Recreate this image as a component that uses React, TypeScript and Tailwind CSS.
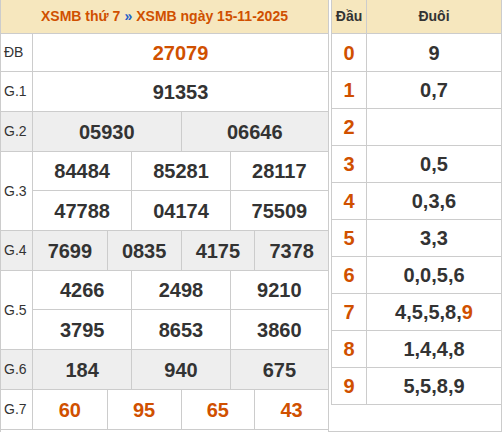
import React from "react"

type Row = {
  label: string
  lines: string[][]
  gray?: boolean
  red?: boolean
  first?: boolean
}

const rows: Row[] = [
  { label: "ĐB", lines: [["27079"]], red: true, first: true },
  { label: "G.1", lines: [["91353"]] },
  { label: "G.2", lines: [["05930", "06646"]], gray: true },
  { label: "G.3", lines: [["84484", "85281", "28117"], ["47788", "04174", "75509"]] },
  { label: "G.4", lines: [["7699", "0835", "4175", "7378"]], gray: true },
  { label: "G.5", lines: [["4266", "2498", "9210"], ["3795", "8653", "3860"]] },
  { label: "G.6", lines: [["184", "940", "675"]], gray: true },
  { label: "G.7", lines: [["60", "95", "65", "43"]], red: true },
]

const cols: Record<number, string> = {
  1: "grid-cols-1",
  2: "grid-cols-2",
  3: "grid-cols-3",
  4: "grid-cols-4",
}

const loto: { dau: string; duoi: React.ReactNode }[] = [
  { dau: "0", duoi: "9" },
  { dau: "1", duoi: "0,7" },
  { dau: "2", duoi: "" },
  { dau: "3", duoi: "0,5" },
  { dau: "4", duoi: "0,3,6" },
  { dau: "5", duoi: "3,3" },
  { dau: "6", duoi: "0,0,5,6" },
  { dau: "7", duoi: <>4,5,5,8,<span className="text-[#d05000]">9</span></> },
  { dau: "8", duoi: "1,4,4,8" },
  { dau: "9", duoi: "5,5,8,9" },
]

function ResultRow({ row }: { row: Row }) {
  return (
    <div className={`flex border-b border-[#cccccc] ${row.gray ? "bg-[#eeeeee]" : "bg-white"}`}>
      <div className="flex w-[32px] shrink-0 items-center border-r border-[#cccccc] pl-[3px] text-[14px] text-[#333333]">
        {row.label}
      </div>
      <div className="flex flex-1 flex-col">
        {row.lines.map((line, i) => (
          <div
            key={i}
            className={`grid ${cols[line.length]} ${row.first ? "h-[37px]" : "h-[39px]"} ${
              i < row.lines.length - 1 ? "border-b border-[#cccccc]" : ""
            }`}
          >
            {line.map((n, j) => (
              <div
                key={j}
                className={`flex items-center justify-center text-[20px] font-bold ${
                  j > 0 ? "border-l border-[#cccccc]" : ""
                } ${row.red ? "text-[#d05000]" : "text-[#333333]"}`}
              >
                {n}
              </div>
            ))}
          </div>
        ))}
      </div>
    </div>
  )
}

export default function App() {
  return (
    <div
      className="flex h-[432px] w-[502px] bg-white"
      style={{ fontFamily: '"Liberation Sans", Arial, sans-serif' }}
    >
      <div className="w-[329px] shrink-0 border-x border-[#cccccc]">
        <div className="flex h-[34px] items-center justify-center border-b border-[#cccccc] bg-[#f6e7be] text-[14px] font-bold text-[#d05000]">
          XSMB thứ 7 <span className="mx-[4px] text-[#1f5fc8]">»</span> XSMB ngày 15-11-2025
        </div>
        {rows.map((r) => (
          <ResultRow key={r.label} row={r} />
        ))}
      </div>

      <div className="flex-1 border-b border-r border-[#cccccc] pl-[2px]">
        <div className="border-l border-[#cccccc]">
          <div className="flex h-[34px] border-b border-[#cccccc] bg-[#f6e7be] text-[14px] font-bold text-[#333333]">
            <div className="flex w-[35px] items-center justify-center border-r border-[#cccccc]">Đầu</div>
            <div className="flex flex-1 items-center justify-center">Đuôi</div>
          </div>
          {loto.map((l, i) => (
            <div
              key={l.dau}
              className={`flex border-b border-[#cccccc] text-[20px] font-bold ${i === 0 ? "h-[38px]" : "h-[37px]"}`}
            >
              <div className="flex w-[35px] items-center justify-center border-r border-[#cccccc] text-[#d05000]">
                {l.dau}
              </div>
              <div className="flex flex-1 items-center justify-center text-[#333333]">{l.duoi}</div>
            </div>
          ))}
        </div>
      </div>
    </div>
  )
}
